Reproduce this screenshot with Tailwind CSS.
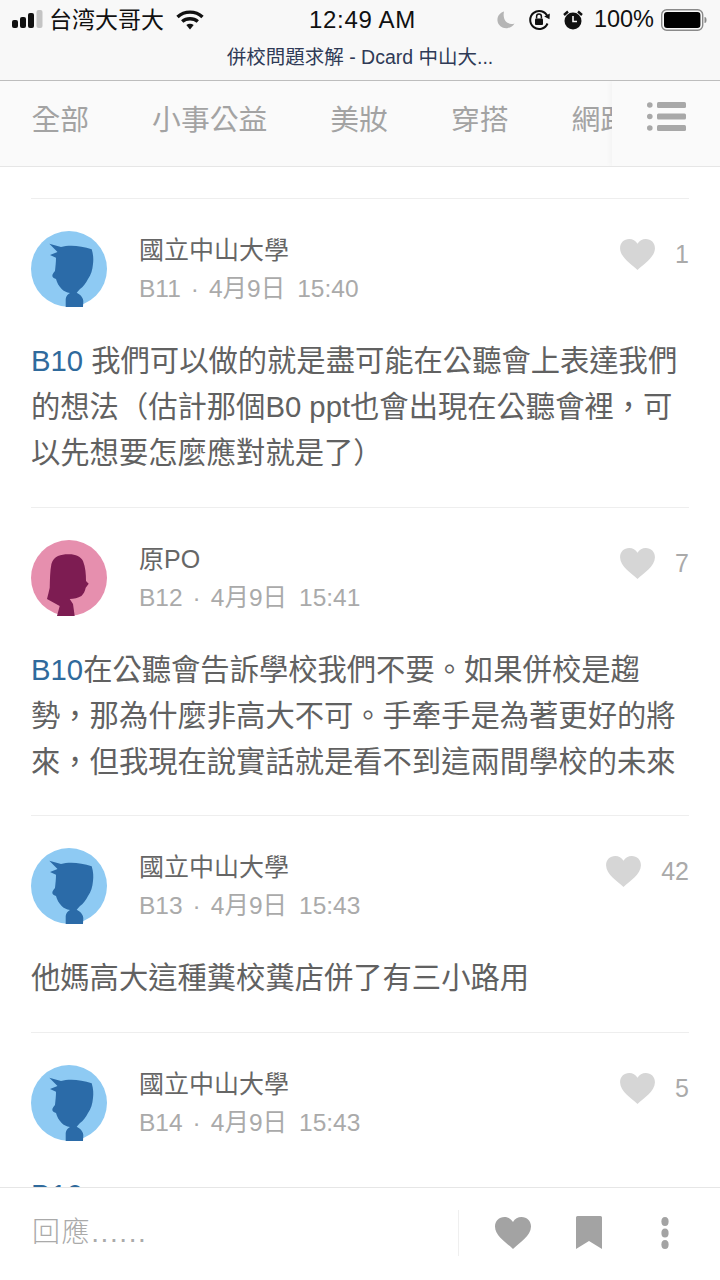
<!DOCTYPE html>
<html lang="zh-Hant">

<head>
    <meta charset="UTF-8">
    <meta name="viewport" content="width=device-width, initial-scale=1.0">
    <title>併校問題求解 - Dcard</title>
    <script src="https://cdn.jsdelivr.net/npm/@tailwindcss/browser@4"></script>
</head>

<body class="bg-white h-screen overflow-hidden flex flex-col font-['Liberation_Sans','Noto_Sans_CJK_TC',sans-serif]">
    <!-- iOS status bar -->
    <div class="h-[40px] shrink-0 bg-[#f8f8f8] relative flex items-center justify-between pl-[12px] pr-[13px] text-[#111]">
        <div class="flex items-center">
            <svg width="31" height="20" viewBox="0 0 31 20" class="fill-current">
                <rect x="0" y="10" width="6" height="8" rx="2" />
                <rect x="8" y="7" width="6" height="11" rx="2" />
                <rect x="16" y="3" width="6" height="15" rx="2" />
                <rect x="24.5" y="0" width="6" height="18" rx="2" fill="#c4c4c4" />
            </svg>
            <span class="ml-[6px] text-[23px] leading-none">台湾大哥大</span>
            <svg width="28" height="20" viewBox="0 0 28 20" class="ml-[12px]">
                <path d="M1.5 7 C8.5 0.5 19.5 0.5 26.5 7" fill="none" stroke="#111" stroke-width="3.4" />
                <path d="M6.2 11.6 C10.5 7.8 17.5 7.8 21.8 11.6" fill="none" stroke="#111" stroke-width="3.4" />
                <path d="M10.3 15 C12.6 13.2 15.4 13.2 17.7 15 L14 19.5 Z" fill="#111" />
            </svg>
        </div>
        <div class="absolute left-[309px] top-[8px] text-[24px] leading-[24px] font-medium tracking-[0.7px]">12:49 AM</div>
        <div class="flex items-center">
            <svg width="18" height="18" viewBox="0 0 18 18" fill="#b5b5b5">
                <path d="M7 0.5 C2.5 2 0 5.5 0.5 10 C1.2 14.8 6 18 11 17 C13.8 16.4 16 14.8 17.5 12.4 C11.5 14.6 5 10 7 0.5 Z" />
            </svg>
            <svg width="23" height="22" viewBox="0 0 23 22" class="ml-[13px]" fill="none" stroke="#111" stroke-width="2">
                <path d="M19.5 14.5 A9 9 0 1 1 19.5 7.5" />
                <path d="M16.2 7.5 L21.5 10.2 L21.8 4.5 Z" fill="#111" stroke="none" />
                <rect x="7" y="9.5" width="8" height="6.5" rx="1" fill="#111" stroke="none" />
                <path d="M8.6 9.5 V7.5 A2.4 2.4 0 0 1 13.4 7.5 V9.5" stroke-width="1.5" />
            </svg>
            <svg width="20" height="20" viewBox="0 0 20 20" class="ml-[12px]">
                <circle cx="10" cy="11" r="8.5" fill="#111" />
                <path d="M1 5 L5 1.5 M19 5 L15 1.5" stroke="#111" stroke-width="2.4" />
                <path d="M10 6 V11.5 H14" fill="none" stroke="#f8f8f8" stroke-width="1.6" />
            </svg>
            <span class="ml-[11px] text-[23.5px] leading-none">100%</span>
            <svg width="46" height="22" viewBox="0 0 46 22" class="ml-[7px]">
                <rect x="0.7" y="0.7" width="41" height="20.6" rx="5" fill="none" stroke="#8a8a8a" stroke-width="1.4" />
                <rect x="3" y="3" width="36.4" height="16" rx="3" fill="#000" />
                <path d="M43.5 8 C45 8 45.5 9 45.5 11 C45.5 13 45 14 43.5 14 Z" fill="#8a8a8a" />
            </svg>
        </div>
    </div>

    <!-- page title -->
    <div class="h-[41px] shrink-0 bg-[#f8f8f8] border-b border-[#bdbdbd] flex items-center justify-center text-[19.5px] leading-none text-[#2f3a56] pb-[4px]">
        併校問題求解 - Dcard 中山大...
    </div>

    <!-- board tabs -->
    <nav class="h-[86px] shrink-0 relative bg-[#fafafa] border-b border-[#e6e6e6] overflow-hidden">
        <div class="flex items-center h-[79px] pl-[31.5px] gap-[63px] text-[28.8px] leading-none text-[#a3a3a3] whitespace-nowrap">
            <span>全部</span>
            <span>小事公益</span>
            <span>美妝</span>
            <span>穿搭</span>
            <span>網路購物</span>
        </div>
        <div class="absolute right-0 top-0 bottom-0 w-[108px] bg-[#fafafa] shadow-[-2px_0_5px_rgba(0,0,0,0.03)] flex items-start pt-[21px] pl-[35px]">
            <svg width="39" height="30" viewBox="0 0 39 30" fill="#a8a8a8">
                <circle cx="2.8" cy="3" r="2.8" />
                <circle cx="2.8" cy="14.5" r="2.8" />
                <circle cx="2.8" cy="26" r="2.8" />
                <rect x="10" y="0" width="29" height="6" rx="1.5" />
                <rect x="10" y="11.5" width="29" height="6" rx="1.5" />
                <rect x="10" y="23" width="29" height="6" rx="1.5" />
            </svg>
        </div>
    </nav>

    <!-- comments -->
    <main id="comment-list" class="flex-1 min-h-0 overflow-hidden px-[31px] pt-[31px]"></main>

    <!-- reply bar -->
    <footer class="h-[93px] shrink-0 bg-white border-t border-[#e6e6e6] flex items-center pl-[32px] pb-[3px]">
        <span class="w-[426px] text-[28px] leading-none text-[#aaaaaa] font-light tracking-[1.6px] whitespace-nowrap">回應......</span>
        <div class="w-px h-[46px] bg-[#efefef]"></div>
        <svg width="36" height="32" viewBox="0 0 36 32" fill="#a3a3a3" class="ml-[36px]">
            <path d="M18 32 C12 26 0 19 0 9.5 C0 4 4 0 9.5 0 C13 0 16.2 1.8 18 5 C19.8 1.8 23 0 26.5 0 C32 0 36 4 36 9.5 C36 19 24 26 18 32 Z" />
        </svg>
        <svg width="26" height="33" viewBox="0 0 26 33" fill="#a3a3a3" class="ml-[45px]">
            <path d="M1.5 0 H24.5 A1.5 1.5 0 0 1 26 1.5 V33 L13 25 L0 33 V1.5 A1.5 1.5 0 0 1 1.5 0 Z" />
        </svg>
        <svg width="10" height="32" viewBox="0 0 10 32" fill="#a3a3a3" class="ml-[58px]">
            <ellipse cx="5" cy="4.5" rx="3.6" ry="4.5" />
            <ellipse cx="5" cy="16" rx="3.6" ry="4.5" />
            <ellipse cx="5" cy="27.5" rx="3.6" ry="4.5" />
        </svg>
    </footer>

    <script>
        const maleAvatar = `
            <svg width="76" height="76" viewBox="0 0 76 76" class="shrink-0">
                <circle cx="38" cy="38" r="38" fill="#8ecaf3" />
                <path fill="#2b6ba8" d="M18.3 12.7 L30 16 C38 13.5 50 14.5 60.7 18.3 C62.5 24 62.5 29 62 33 C61.5 39 60 44 57 48 C55 52 52 56 49 58 L45.7 61.7 C49 63.5 52 66 52.3 70 L52 76 L34.7 76 L34.7 68 C35 65 37 63 39 62 C35.5 61.5 32.5 60 30.7 58 C28 55 26 52 25 48 C23.5 47.5 21.5 46.5 21.3 45 C21.3 43 23 41 24 40 C24.5 35 25 31 25 26.7 L19 24 L26.5 21 Z" />
            </svg>`;
        const femaleAvatar = `
            <svg width="76" height="76" viewBox="0 0 76 76" class="shrink-0">
                <circle cx="38" cy="38" r="38" fill="#e68fae" />
                <path fill="#7d1c52" d="M37 14.3 C44 14 50 16.5 52 21 C54.5 27 55 34 55 41 L57.7 43.7 L54.7 47.7 C54 51 52.5 54 50.4 56 C47 58 43 59 38.7 59 L42 64 L43.7 76 L26 76 L28.7 66 L16 59 C17 55 18 51 18.7 47.7 C19 39 19 31 20.4 24 C21.5 20 24 17.5 27 16 C30 14.8 33.5 14.3 37 14.3 Z" />
            </svg>`;

        const comments = [
            { avatar: maleAvatar, name: '國立中山大學', floor: 'B11', date: '4月9日', time: '15:40', likes: 1, body: '<a class="text-[#2f6a9c]">B10</a> 我們可以做的就是盡可能在公聽會上表達我們<br>的想法（估計那個B0 ppt也會出現在公聽會裡，可<br>以先想要怎麼應對就是了）' },
            { avatar: femaleAvatar, name: '原PO', floor: 'B12', date: '4月9日', time: '15:41', likes: 7, body: '<a class="text-[#2f6a9c]">B10</a>在公聽會告訴學校我們不要。如果併校是趨<br>勢，那為什麼非高大不可。手牽手是為著更好的將<br>來，但我現在說實話就是看不到這兩間學校的未來' },
            { avatar: maleAvatar, name: '國立中山大學', floor: 'B13', date: '4月9日', time: '15:43', likes: 42, body: '他媽高大這種糞校糞店併了有三小路用' },
            { avatar: maleAvatar, name: '國立中山大學', floor: 'B14', date: '4月9日', time: '15:43', likes: 5, body: '<a class="text-[#2f6a9c]">B10</a>' }
        ];

        document.getElementById('comment-list').innerHTML = comments.map(c => `
            <article class="border-t border-[#eeeeee] pt-[32px] pb-[30.6px]">
                <div class="flex items-start">
                    ${c.avatar}
                    <div class="ml-[32px] flex-1">
                        <div class="text-[25px] leading-[30px] mt-[4px] text-[#666666]">${c.name}</div>
                        <div class="flex text-[24.5px] leading-[30px] mt-[9px] text-[#aaaaaa] whitespace-nowrap">
                            <span>${c.floor}</span><span class="mx-[10px]">·</span><span>${c.date}</span><span class="ml-[12px]">${c.time}</span>
                        </div>
                    </div>
                    <div class="flex items-center mt-[8px]">
                        <svg width="35" height="31" viewBox="0 0 36 32" fill="#d6d6d6">
                            <path d="M18 32 C12 26 0 19 0 9.5 C0 4 4 0 9.5 0 C13 0 16.2 1.8 18 5 C19.8 1.8 23 0 26.5 0 C32 0 36 4 36 9.5 C36 19 24 26 18 32 Z" />
                        </svg>
                        <span class="ml-[20px] text-[25px] leading-none text-[#aaaaaa]">${c.likes}</span>
                    </div>
                </div>
                <p class="mt-[31px] text-[29.3px] leading-[46px] text-[#616161] whitespace-nowrap">${c.body}</p>
            </article>
        `).join('');
    </script>
</body>

</html>
